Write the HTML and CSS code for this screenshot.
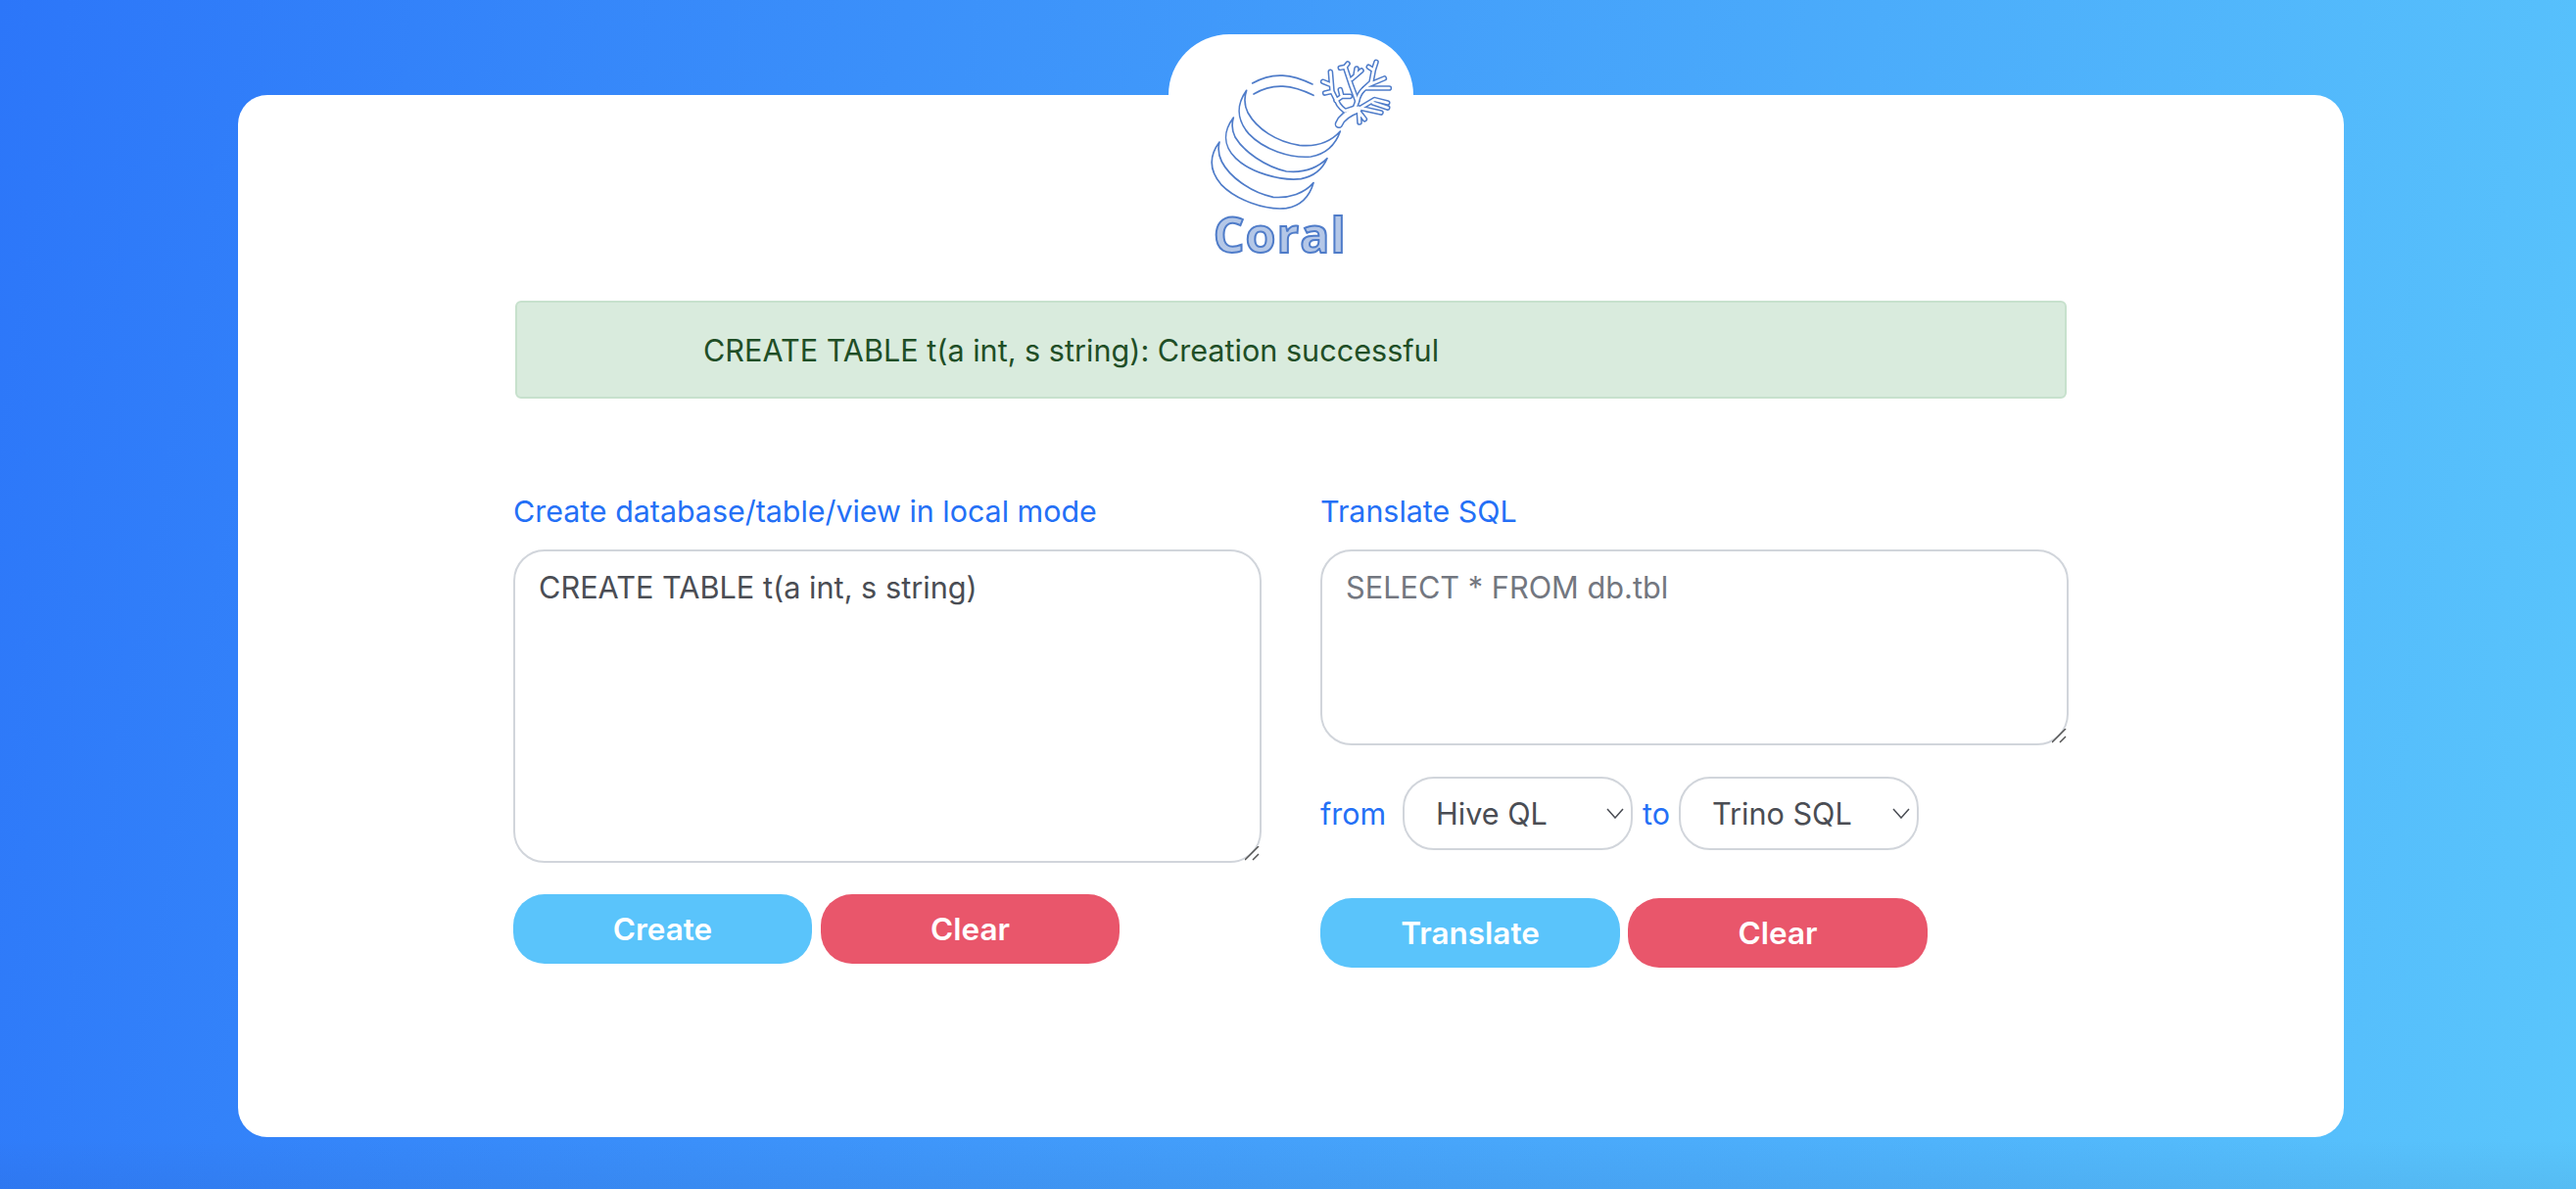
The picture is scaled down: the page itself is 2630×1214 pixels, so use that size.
FILE: index.html
```html
<!DOCTYPE html>
<html lang="en">
<head>
<meta charset="utf-8">
<title>Coral</title>
<link rel="stylesheet" href="styles.css">
</head>
<body>
<div class="page">
  <div class="tab">
    <svg class="logo" viewBox="0 0 900 780" width="300" height="260">
      <g class="lines">
        <path d="M356 195C420 158 478 168 540 198"/>
        <path d="M360 228C420 192 478 200 543 232"/>
        <path d="M338 217C308 258 306 305 345 350C390 398 470 425 535 420C580 412 610 385 625 342C595 375 550 390 500 385C430 375 370 335 342 285C330 260 330 240 338 217Z"/>
        <path d="M298 300C268 340 264 385 305 425C350 468 440 495 505 488C545 480 570 460 585 425C555 455 510 470 460 465C395 450 330 405 303 360C293 340 292 320 298 300Z"/>
        <path d="M255 375C225 415 222 460 260 505C305 552 395 585 460 578C505 570 530 545 543 500C515 532 470 548 420 544C350 530 285 480 262 435C252 415 250 395 255 375Z"/>
      </g>
      <g class="coral-out">
        <path class="trunk" d="M621 320Q632 292 680 274"/>
        <path d="M670 270L640 280Q628 272 620 260L600 220L595 160M572 190L597 200M578 225L600 220M612 248L630 235L655 235M630 235L625 215"/>
        <path d="M670 270L677 250L660 205L640 145L625 148M640 145L648 135M660 182L690 156M672 170L675 150"/>
        <path d="M677 250Q682 228 695 215L720 192L727 155L735 130M727 155L712 145M712 200L760 180M700 210L775 210"/>
        <path d="M680 275L730 245L770 255M725 255L770 270M692 272L750 285M682 282L700 305M682 282L684 315"/>
      </g>
      <g class="coral-in">
        <path class="trunk" d="M621 320Q632 292 680 274"/>
        <path d="M670 270L640 280Q628 272 620 260L600 220L595 160M572 190L597 200M578 225L600 220M612 248L630 235L655 235M630 235L625 215"/>
        <path d="M670 270L677 250L660 205L640 145L625 148M640 145L648 135M660 182L690 156M672 170L675 150"/>
        <path d="M677 250Q682 228 695 215L720 192L727 155L735 130M727 155L712 145M712 200L760 180M700 210L775 210"/>
        <path d="M680 275L730 245L770 255M725 255L770 270M692 272L750 285M682 282L700 305M682 282L684 315"/>
      </g>
      <text class="word" x="236" y="714">Coral</text>
    </svg>
  </div>
  <main class="card">
    <div class="alert">CREATE TABLE t(a int, s string): Creation successful</div>
    <div class="columns">
      <section class="col">
        <label class="label">Create database/table/view in local mode</label>
        <textarea class="input tall">CREATE TABLE t(a int, s string)</textarea>
        <div class="buttons left-buttons">
          <button class="btn btn-blue">Create</button>
          <button class="btn btn-red">Clear</button>
        </div>
      </section>
      <section class="col">
        <label class="label">Translate SQL</label>
        <textarea class="input short" placeholder="SELECT * FROM db.tbl"></textarea>
        <div class="selects">
          <span class="label from">from</span>
          <select class="select sel-from"><option>Hive QL</option></select>
          <span class="label to">to</span>
          <select class="select sel-to"><option>Trino SQL</option></select>
        </div>
        <div class="buttons">
          <button class="btn btn-blue btn-wide">Translate</button>
          <button class="btn btn-red btn-wide">Clear</button>
        </div>
      </section>
    </div>
  </main>
</div>
</body>
</html>
```
FILE: styles.css
```css
* { box-sizing: border-box; }
html, body { margin: 0; height: 100%; }
body {
  background:
    linear-gradient(to bottom, rgba(30, 60, 120, 0) calc(100% - 50px), rgba(30, 60, 120, .07) 100%),
    linear-gradient(100deg, #2c76f9 0%, #5ac6fc 100%);
  font-family: Inter, "Liberation Sans", sans-serif;
  overflow: hidden;
}
.page {
  display: flex;
  flex-direction: column;
  align-items: center;
  padding: 35px 0 0 6px;
}
.tab {
  position: relative;
  width: 250px;
  height: 62px;
  background: #fff;
  border-radius: 70px 70px 0 0;
}
.logo {
  position: absolute;
  left: -33px;
  top: -15px;
}
.lines path { fill: #fff; stroke: #4f7cc9; stroke-width: 5; stroke-linejoin: round; stroke-linecap: round; }
.coral-out path, .coral-in path { fill: none; stroke-linecap: round; stroke-linejoin: round; }
.coral-out path { stroke: #4f7cc9; stroke-width: 17; }
.coral-in path { stroke: #fff; stroke-width: 8; }
.coral-out .trunk { stroke-width: 26; }
.coral-in .trunk { stroke-width: 17; }
.word {
  font-family: "Open Sans", sans-serif;
  font-weight: 700;
  font-size: 150px;
  letter-spacing: 3px;
  fill: #b4c7e7;
  stroke: #4f7cc9;
  stroke-width: 6;
}
.card {
  width: 2150px;
  height: 1064px;
  background: #fff;
  border-radius: 30px;
  padding: 210px 281px 0;
}
.alert {
  height: 100px;
  margin-left: 2px;
  margin-right: 2px;
  padding-left: 190px;
  display: flex;
  align-items: center;
  background: #d9ebdd;
  border: 2px solid #c7e1cd;
  border-radius: 6px;
  color: #1f4e26;
  font-size: 30.6px;
}
.columns {
  display: flex;
  gap: 60px;
  margin-top: 95px;
}
.col { width: 764px; display: flex; flex-direction: column; }
.label {
  color: #2470f6;
  font-size: 30.4px;
  line-height: 40px;
}
.col > .label { margin-bottom: 19px; }
.input {
  display: block;
  width: 100%;
  border: 2px solid #d1d5db;
  border-radius: 32px;
  padding: 19px 24px;
  font-family: inherit;
  font-size: 30.7px;
  line-height: 36px;
  color: #4a4d54;
  background: #fff;
  outline: none;
}
.input::placeholder { color: #737780; opacity: 1; }
.input::-webkit-resizer {
  background: url("data:image/svg+xml,%3Csvg xmlns='http://www.w3.org/2000/svg' width='16' height='16'%3E%3Cpath d='M0 14L14 0M8 14l6-6' stroke='%23555' stroke-width='1.5' fill='none'/%3E%3C/svg%3E") no-repeat;
}
.tall { height: 320px; }
.short { height: 200px; }
.selects {
  display: flex;
  align-items: center;
  margin-top: 32px;
  height: 75px;
}
.from { width: 84px; }
.to { width: 37px; margin-left: 10px; }
.select {
  height: 75px;
  border: 2px solid #d1d5db;
  border-radius: 32px;
  padding: 0 0 0 32px;
  font-family: inherit;
  font-size: 30.6px;
  color: #4a4d54;
  appearance: none;
  background: #fff url("data:image/svg+xml,%3Csvg xmlns='http://www.w3.org/2000/svg' width='18' height='11'%3E%3Cpath d='M1 1l8 9 8-9' fill='none' stroke='%234a4d54' stroke-width='1.5'/%3E%3C/svg%3E") no-repeat right 7px center;
}
.sel-from { width: 235px; }
.sel-to { width: 245px; }
.buttons { display: flex; gap: 8px; margin-top: 49px; }
.left-buttons { gap: 9px; margin-top: 32px; }
.btn {
  width: 305px;
  height: 71px;
  border: 0;
  border-radius: 32px;
  color: #fff;
  font-family: inherit;
  font-size: 31.5px;
  font-weight: 600;
}
.btn-wide { width: 306px; }
.btn-blue { background: #5ac4fb; }
.btn-red { background: #e9566b; }
```
